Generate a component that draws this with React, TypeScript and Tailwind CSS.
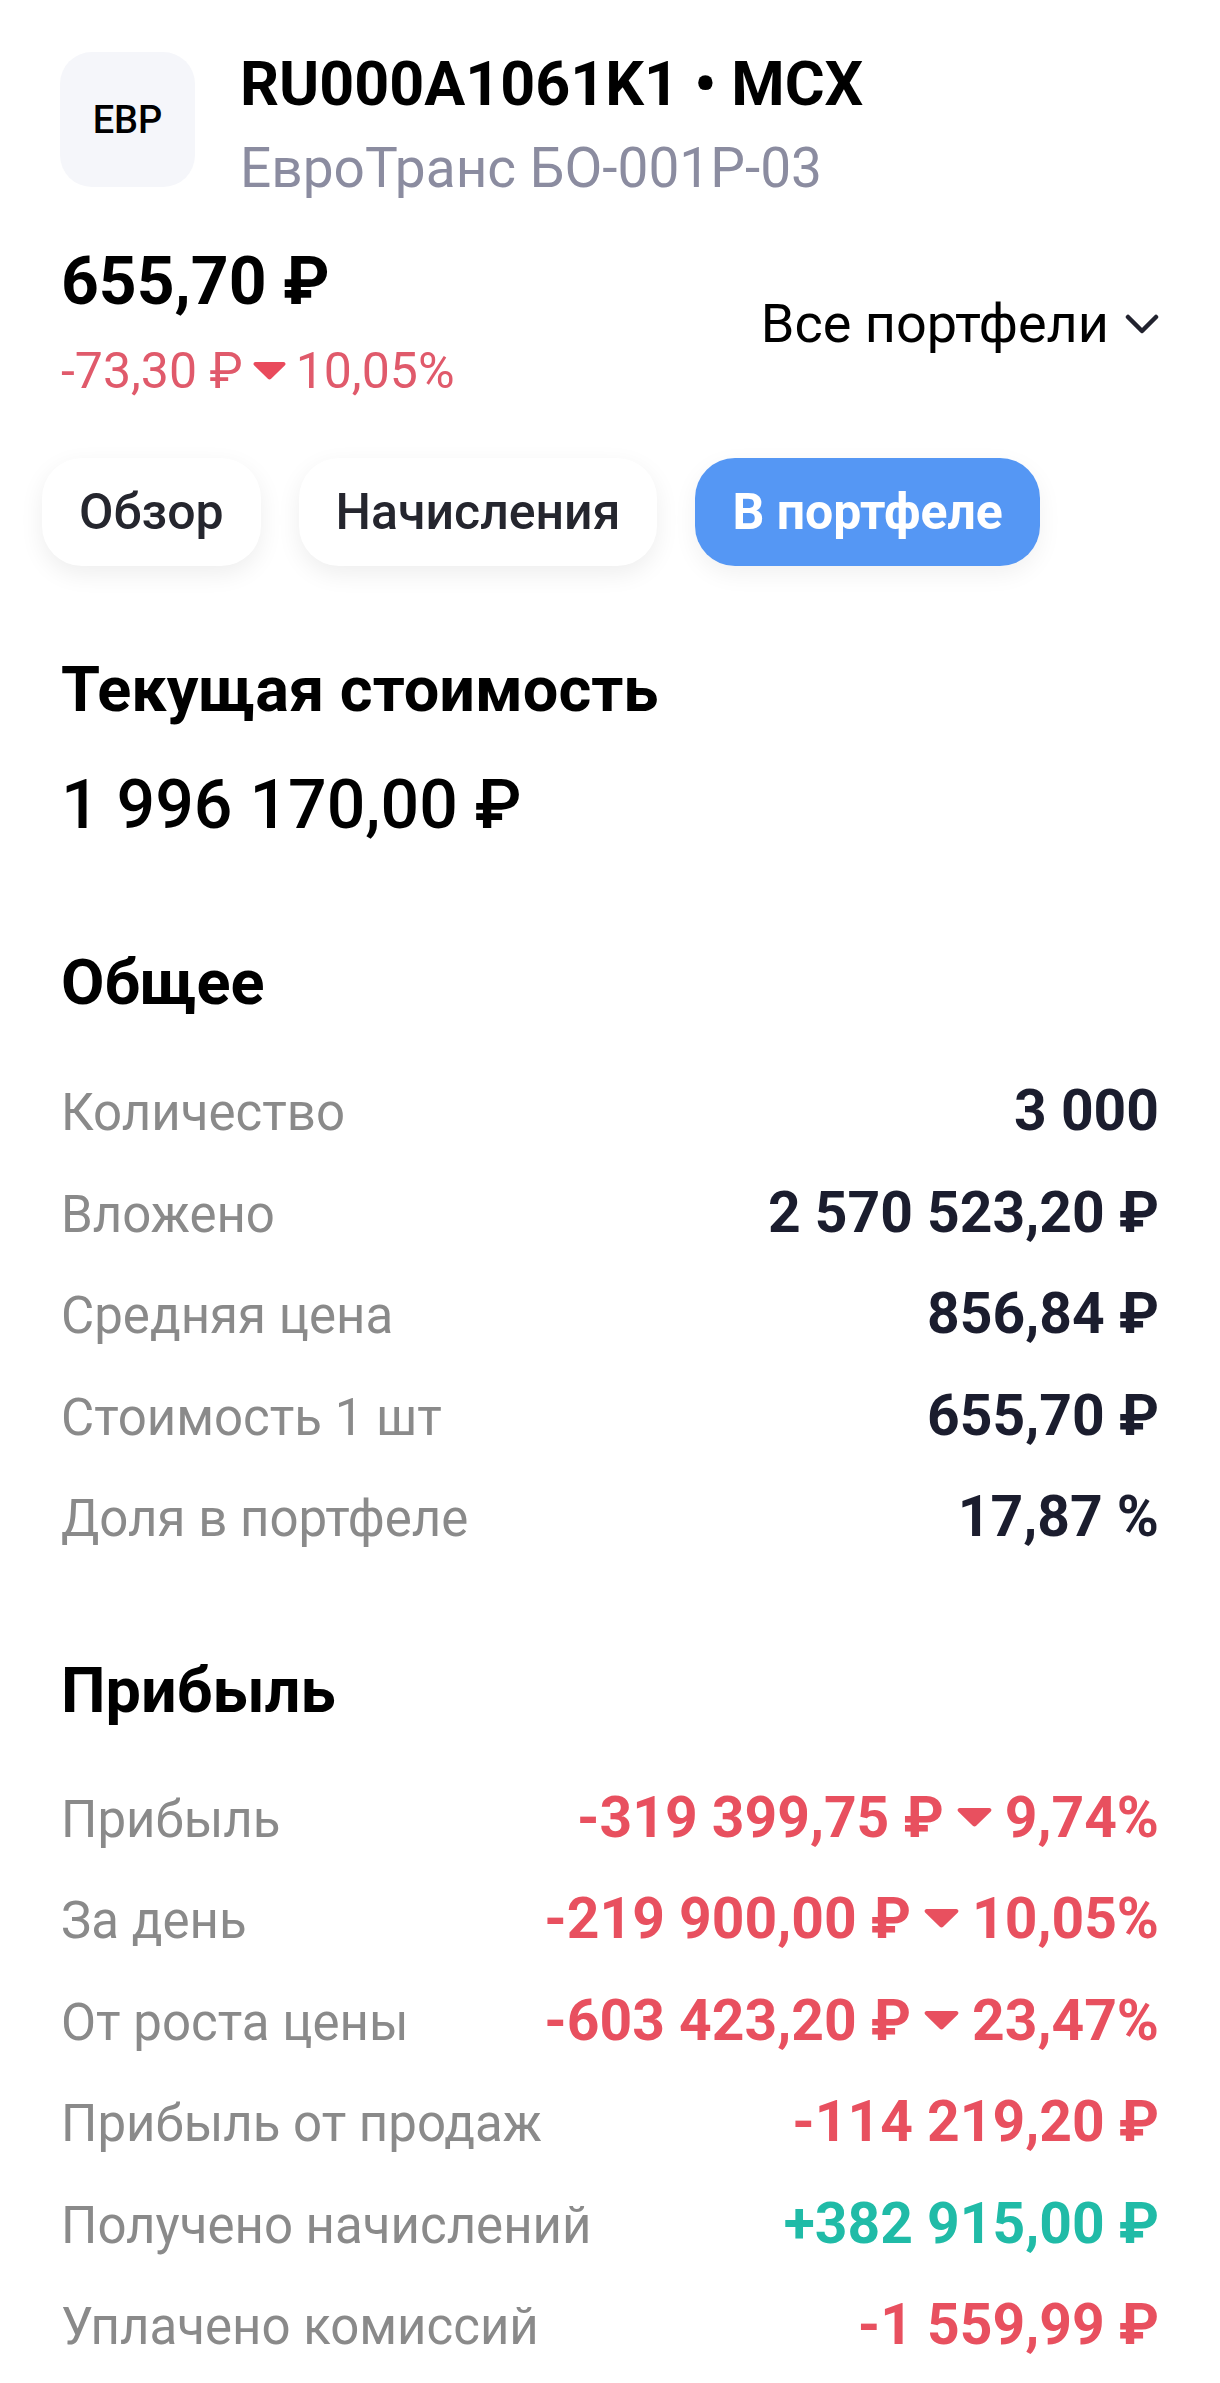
import React from "react";

type Row = { label: string; value: string; pct?: string; tone?: "dark" | "red" | "green" };

const general: Row[] = [
  { label: "Количество", value: "3 000" },
  { label: "Вложено", value: "2 570 523,20 ₽" },
  { label: "Средняя цена", value: "856,84 ₽" },
  { label: "Стоимость 1 шт", value: "655,70 ₽" },
  { label: "Доля в портфеле", value: "17,87 %" },
];

const profit: Row[] = [
  { label: "Прибыль", value: "-319 399,75 ₽", pct: "9,74%", tone: "red" },
  { label: "За день", value: "-219 900,00 ₽", pct: "10,05%", tone: "red" },
  { label: "От роста цены", value: "-603 423,20 ₽", pct: "23,47%", tone: "red" },
  { label: "Прибыль от продаж", value: "-114 219,20 ₽", tone: "red" },
  { label: "Получено начислений", value: "+382 915,00 ₽", tone: "green" },
  { label: "Уплачено комиссий", value: "-1 559,99 ₽", tone: "red" },
];

const DownTriangle = ({ className }: { className?: string }) => (
  <svg viewBox="0 0 36 20" className={className} fill="currentColor">
    <path d="M2.5 0h31c2 0 3 2.2 1.7 3.7L19.8 18.6c-1 1-2.6 1-3.6 0L0.8 3.7C-0.5 2.2 0.5 0 2.5 0z" />
  </svg>
);

const StatRow = ({ row }: { row: Row }) => {
  const color =
    row.tone === "red" ? "text-[#e8505f]" : row.tone === "green" ? "text-[#20bba7]" : "text-[#1b1d2e]";
  return (
    <div className="flex h-[101.5px] items-baseline justify-between">
      <span className="text-[51px] leading-[101.5px] text-[#8a8a8a]">{row.label}</span>
      <span className={`flex items-baseline text-[57px] font-bold leading-[101.5px] ${color}`}>
        {row.value}
        {row.pct && (
          <>
            <DownTriangle className="mx-[13px] h-[19px] w-[35px] self-center" />
            {row.pct}
          </>
        )}
      </span>
    </div>
  );
};

export default function App() {
  const tabs = ["Обзор", "Начисления", "В портфеле"];
  return (
    <div className="min-h-[2383px] w-[1220px] bg-white font-[Roboto,sans-serif] text-black">
      {/* header */}
      <header className="flex gap-[45px] pl-[60px] pt-[52px]">
        <div className="flex h-[135px] w-[135px] items-center justify-center rounded-[32px] bg-[#f5f6fa]">
          <span className="text-[38px] font-medium leading-none text-black">ЕВР</span>
        </div>
        <div className="flex flex-col">
          <h1 className="text-[61px] font-bold leading-[64px]">RU000A1061K1 • MCX</h1>
          <p className="mt-[20px] text-[55px] leading-[64px] text-[#8b8ca0]">ЕвроТранс БО-001Р-03</p>
        </div>
      </header>

      {/* price */}
      <div className="mt-[44px] flex items-center justify-between px-[61px]">
        <div className="flex flex-col">
          <div className="text-[66px] font-bold leading-[76px]">655,70 ₽</div>
          <div className="mt-[23px] flex items-baseline text-[50px] leading-[56px] text-[#e05a6b]">
            -73,30 ₽
            <DownTriangle className="mx-[9px] h-[18px] w-[35px] self-center text-[#e94a5c]" />
            10,05%
          </div>
        </div>
        <button className="flex items-center gap-[16px] pt-[4px] text-[54px] leading-[60px] text-black">
          Все портфели
          <svg viewBox="0 0 34 20" className="h-[20px] w-[34px]" fill="none" stroke="#22232f" strokeWidth="4.5" strokeLinecap="round" strokeLinejoin="round">
            <path d="M3 3l14 14L31 3" />
          </svg>
        </button>
      </div>

      {/* tabs */}
      <nav className="mt-[59px] flex gap-[38px] px-[42px]">
        {tabs.map((t, i) => (
          <button
            key={t}
            className={`flex h-[108px] items-center rounded-[40px] px-[37px] text-[50px] ${
              i === 2
                ? "bg-[#5597f4] font-bold text-white shadow-[0_8px_24px_rgba(0,0,0,0.06)]"
                : "bg-white font-medium text-[#25262e] shadow-[0_8px_24px_rgba(0,0,0,0.07)]"
            }`}
          >
            {t}
          </button>
        ))}
      </nav>

      <section className="px-[61px]">
        <h2 className="mt-[88px] text-[63px] font-bold leading-[72px]">Текущая стоимость</h2>
        <div className="mt-[41px] text-[68px] font-medium leading-[76px]">1 996 170,00 ₽</div>

        <h2 className="mt-[104px] text-[63px] font-bold leading-[72px]">Общее</h2>
        <div className="mt-[41px]">
          {general.map((r) => (
            <StatRow key={r.label} row={r} />
          ))}
        </div>

        <h2 className="mt-[87px] text-[63px] font-bold leading-[72px]">Прибыль</h2>
        <div className="mt-[40px]">
          {profit.map((r) => (
            <StatRow key={r.label} row={r} />
          ))}
        </div>
      </section>
    </div>
  );
}
